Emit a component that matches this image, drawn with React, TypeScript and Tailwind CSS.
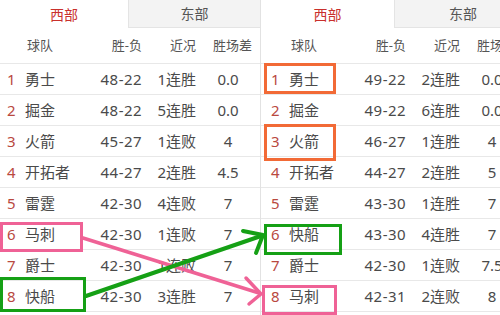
type Row = [string, string, string, string];

const west: Row[] = [
  ["勇士", "48-22", "1连胜", "0.0"],
  ["掘金", "48-22", "5连胜", "0.0"],
  ["火箭", "45-27", "1连败", "4"],
  ["开拓者", "44-27", "2连胜", "4.5"],
  ["雷霆", "42-30", "4连败", "7"],
  ["马刺", "42-30", "1连败", "7"],
  ["爵士", "42-30", "1连败", "7"],
  ["快船", "42-30", "3连胜", "7"],
];

const westLater: Row[] = [
  ["勇士", "49-22", "2连胜", "0.0"],
  ["掘金", "49-22", "6连胜", "0.0"],
  ["火箭", "46-27", "1连胜", "4"],
  ["开拓者", "44-27", "2连胜", "5"],
  ["雷霆", "43-30", "1连胜", "7"],
  ["快船", "43-30", "4连胜", "7"],
  ["爵士", "42-30", "1连败", "7.5"],
  ["马刺", "42-31", "2连败", "8"],
];

function Standings({ rows, tabW, shift }: { rows: Row[]; tabW: string; shift: string }) {
  return (
    <div className="flex flex-col">
      {/* tabs */}
      <div className="flex h-[28px] shrink-0 text-[14px]">
        <div className={`${tabW} flex shrink-0 items-center justify-center text-[#c9302c]`}>西部</div>
        <div className="flex flex-1 items-center justify-center border-b border-l border-[#e4e4e4] bg-[#f3f3f3] text-[#555]">
          东部
        </div>
      </div>

      {/* header */}
      <div className={`flex h-[36px] shrink-0 items-center border-b border-[#e8e8e8] text-[13px] text-[#555] ${shift}`}>
        <div className="w-[24px] shrink-0" />
        <div className="w-[66px] shrink-0 pl-[3px]">球队</div>
        <div className="w-[52px] shrink-0 text-right">胜-负</div>
        <div className="w-[54px] shrink-0 text-right">近况</div>
        <div className="w-[64px] shrink-0 pl-[17px] whitespace-nowrap">胜场差</div>
      </div>

      {rows.map((r, i) => (
        <div
          key={i}
          className={`flex h-[31px] shrink-0 items-center border-b border-[#e8e8e8] text-[15px] text-[#4a4a4a] ${shift}`}
        >
          <div className="w-[24px] shrink-0 pl-[7px] text-[#b9493f]">{i + 1}</div>
          <div className="w-[66px] shrink-0 pl-[1px] whitespace-nowrap">{r[0]}</div>
          <div className="w-[52px] shrink-0 text-right tracking-[0.03em]">{r[1]}</div>
          <div className="w-[54px] shrink-0 text-right whitespace-nowrap">{r[2]}</div>
          <div className="w-[64px] shrink-0 text-center">{r[3]}</div>
        </div>
      ))}
    </div>
  );
}

export default function App() {
  return (
    <div
      className="relative flex h-[315px] w-[500px] overflow-hidden bg-white"
      style={{ fontFamily: '"Noto Sans", "Noto Sans CJK SC", sans-serif' }}
    >
      <div className="w-[261px] shrink-0 overflow-hidden border-r border-[#e2e2e2]">
        <Standings rows={west} tabW="w-[128px]" shift="" />
      </div>
      <div className="flex-1 overflow-hidden">
        <div className="w-[270px]">
          <Standings rows={westLater} tabW="w-[133px]" shift="pl-[3px]" />
        </div>
      </div>

      {/* annotation boxes */}
      <div className="absolute left-[264px] top-[63px] h-[31px] w-[72px] border-[3px] border-[#f26a36]" />
      <div className="absolute left-[264px] top-[124px] h-[37px] w-[72px] border-[3px] border-[#f26a36]" />
      <div className="absolute left-0 top-[222px] h-[30px] w-[83px] border-[3px] border-[#ef6296]" />
      <div className="absolute left-0 top-[277px] h-[35px] w-[86px] border-[3px] border-[#15a015]" />
      <div className="absolute left-[264px] top-[224px] h-[31px] w-[78px] border-[3px] border-[#15a015]" />
      <div className="absolute left-[262px] top-[285px] h-[30px] w-[75px] border-[3px] border-[#ef6296]" />

      {/* arrows */}
      <svg className="pointer-events-none absolute left-0 top-0" width="500" height="315" viewBox="0 0 500 315">
        <g stroke="#ef6296" strokeWidth="3.5" fill="none" strokeLinecap="round" strokeLinejoin="round">
          <line x1="83" y1="238" x2="259" y2="293" />
          <polyline points="246,278 261,294 249,304" />
        </g>
        <g stroke="#15a015" strokeWidth="4" fill="none" strokeLinecap="round" strokeLinejoin="round">
          <line x1="86" y1="296" x2="261" y2="236" />
          <polyline points="243,231 263,235 256,253" />
        </g>
      </svg>
    </div>
  );
}
